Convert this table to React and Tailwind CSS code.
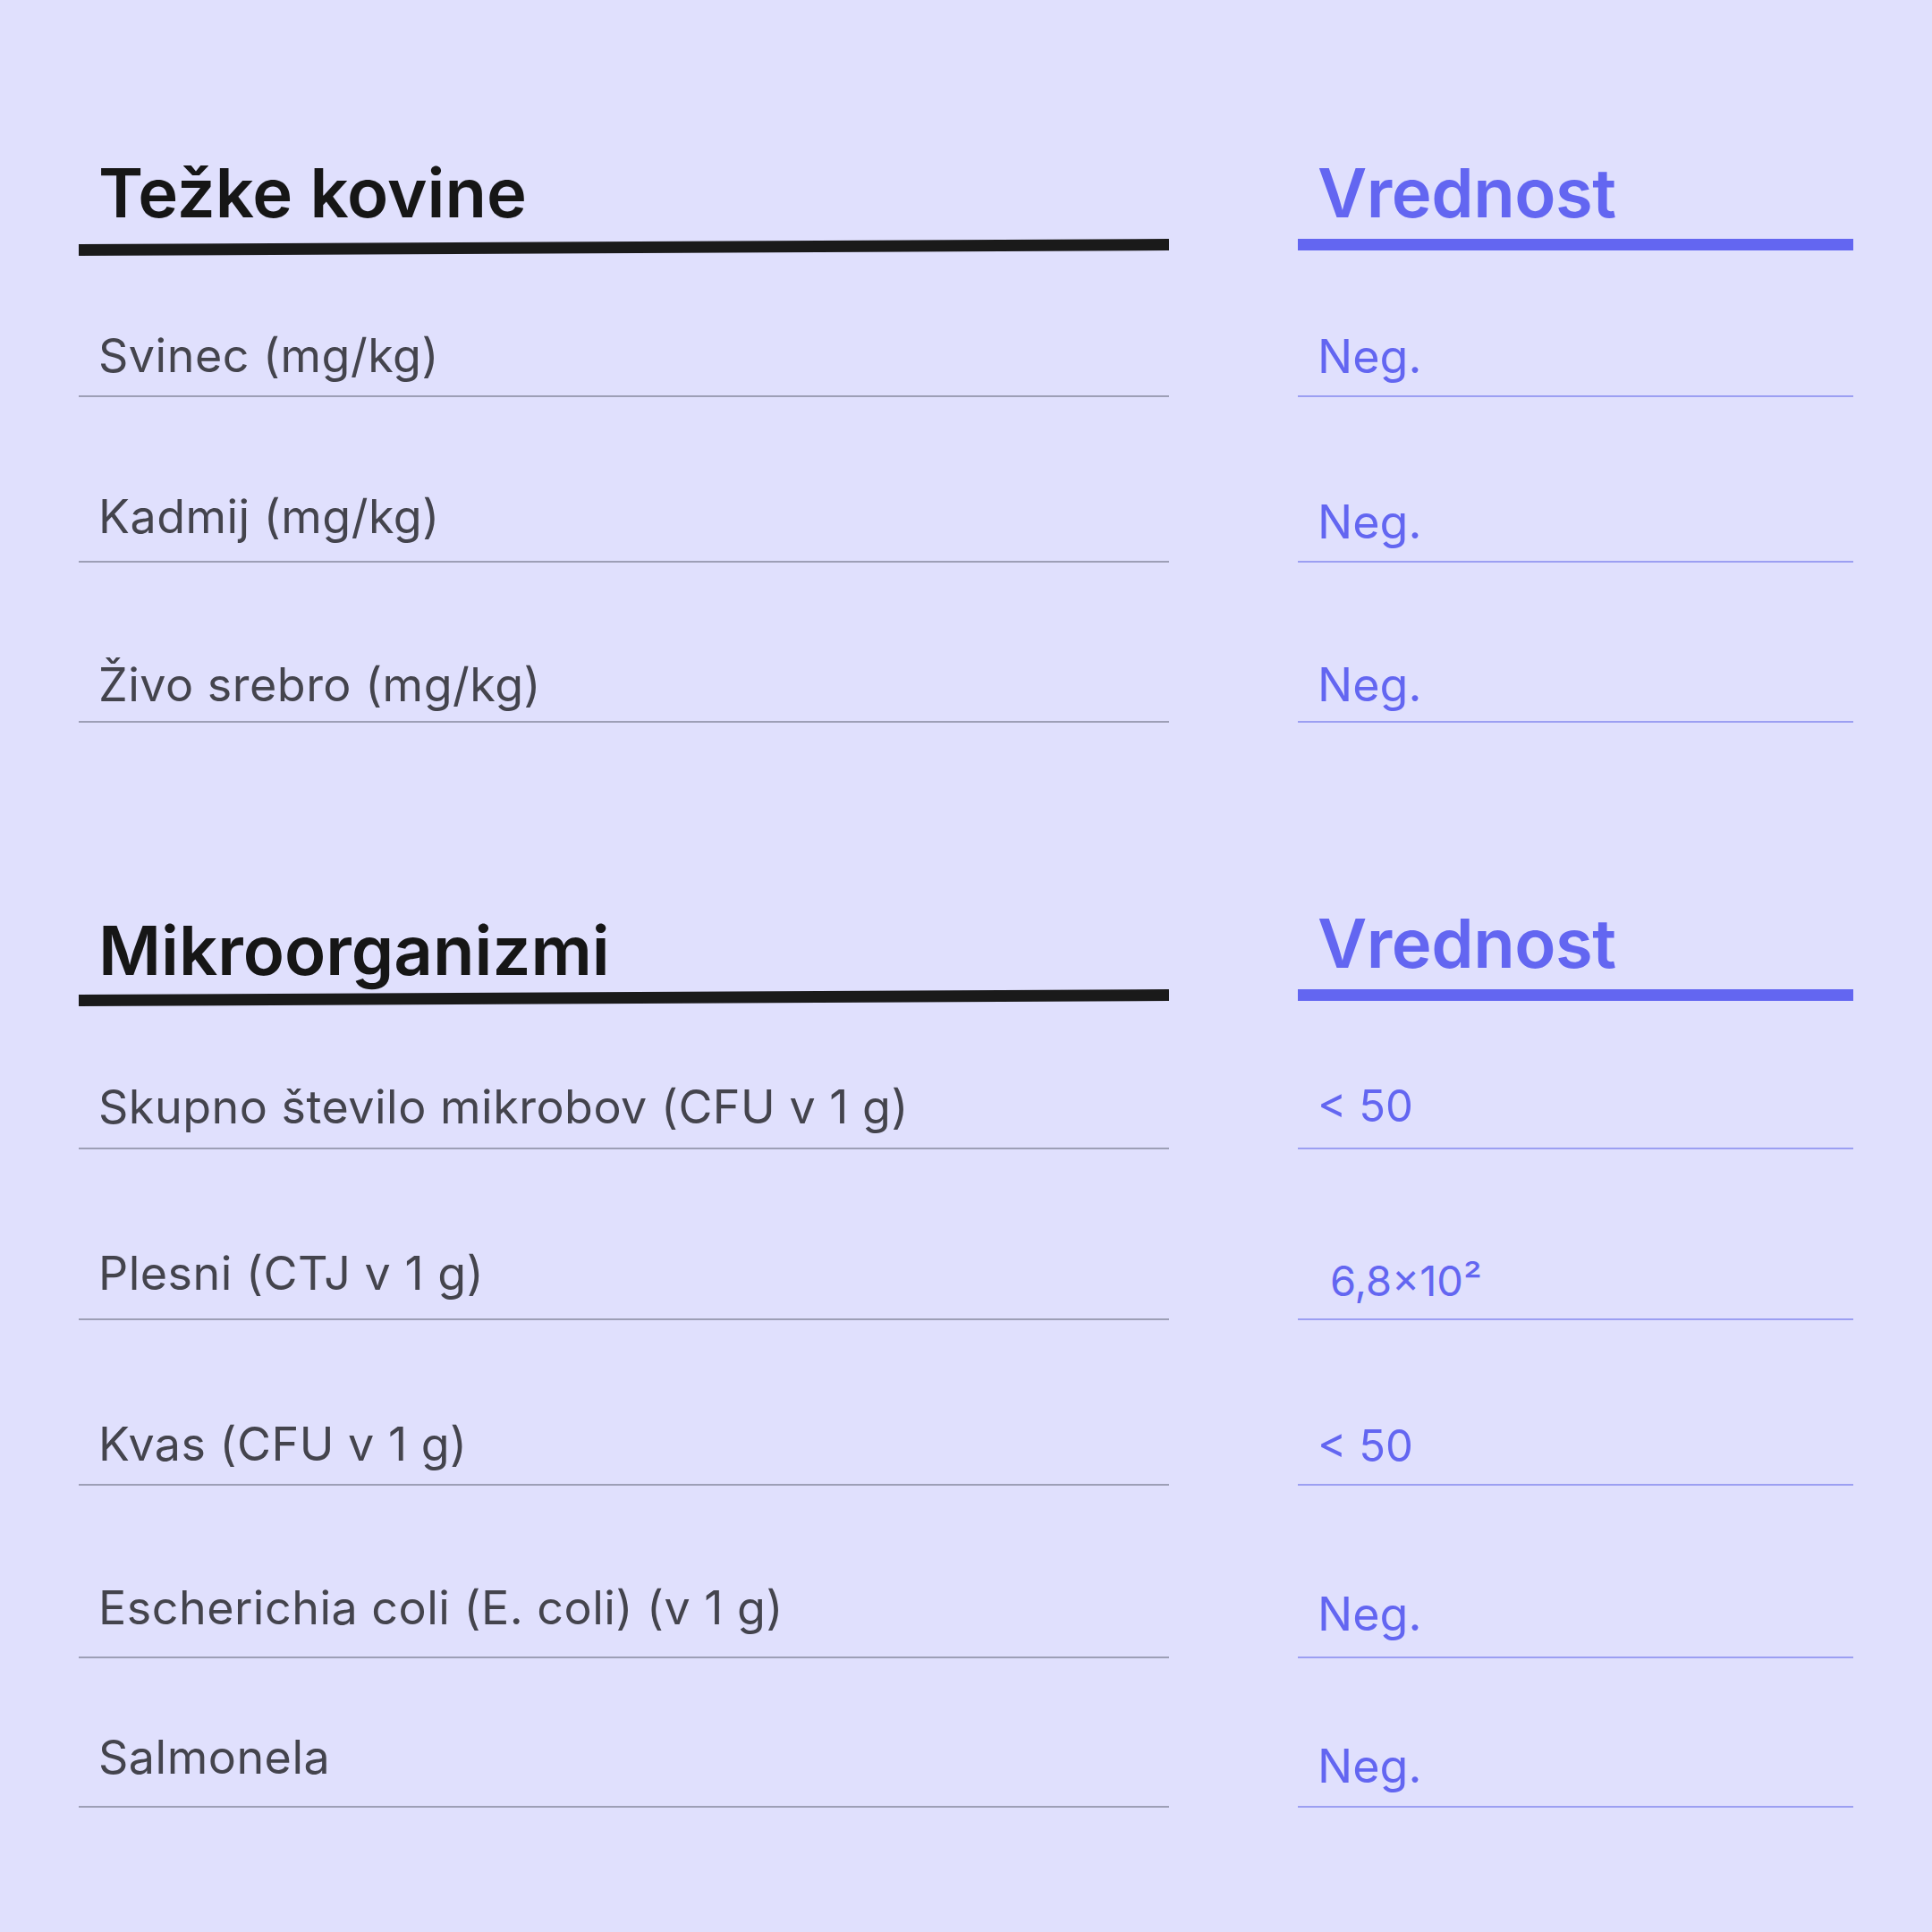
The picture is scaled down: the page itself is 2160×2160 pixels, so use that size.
import React from 'react';

const heavyMetals = [
  { label: 'Svinec (mg/kg)', value: 'Neg.', row: 'h-[161px]', lpb: 'pb-[18px]', rpb: 'pb-[17px]' },
  { label: 'Kadmij (mg/kg)', value: 'Neg.', row: 'h-[185px]', lpb: 'pb-[23px]', rpb: 'pb-[17px]' },
  { label: 'Živo srebro (mg/kg)', value: 'Neg.', row: 'h-[179px]', lpb: 'pb-[14px]', rpb: 'pb-[14px]' },
];

const microbes = [
  { label: 'Skupno število mikrobov (CFU v 1 g)', value: '< 50', row: 'h-[163px]', lpb: 'pb-[19px]', rpb: 'pb-[22px]', small: true },
  { label: 'Plesni (CTJ v 1 g)', value: '6,8×10²', row: 'h-[191px]', lpb: 'pb-[24px]', rpb: 'pb-[19px]', indent: true },
  { label: 'Kvas (CFU v 1 g)', value: '< 50', row: 'h-[185px]', lpb: 'pb-[18px]', rpb: 'pb-[18px]', small: true },
  { label: 'Escherichia coli (E. coli) (v 1 g)', value: 'Neg.', row: 'h-[193px]', lpb: 'pb-[28px]', rpb: 'pb-[21px]' },
  { label: 'Salmonela', value: 'Neg.', row: 'h-[167px]', lpb: 'pb-[28px]', rpb: 'pb-[18px]' },
];

function Row({ item }) {
  let valueSize = 'text-[52px]';
  if (item.indent) valueSize = 'text-[47px]';
  else if (item.small) valueSize = 'text-[49px]';

  return (
    <div className={`grid grid-cols-[1219px_621px] gap-x-[144px] ${item.row}`}>
      <div className={`flex items-end border-b-2 border-[#9d9fb6] pl-[22px] ${item.lpb}`}>
        <span className="text-[52px] leading-none tracking-[0.5px] text-[#44444d]">{item.label}</span>
      </div>
      <div className={`flex items-end border-b-2 border-[#9c9ff2] ${item.indent ? 'pl-[36px]' : 'pl-[22px]'} ${item.rpb}`}>
        <span className={`${valueSize} leading-none text-[#6366f1]`}>{item.value}</span>
      </div>
    </div>
  );
}

export default function App() {
  return (
    <div className="min-h-screen w-full bg-[#e0e0fd] px-[88px] font-['Inter','Liberation_Sans',sans-serif]">
      {/* --- Težke kovine --- */}
      <div className="grid grid-cols-[1219px_621px] gap-x-[144px] items-start">
        <div className="pt-[177px]">
          <h2 className="pl-[22px] text-[76px] font-semibold leading-none text-[#161616]">Težke kovine</h2>
          <div className="mt-[17px] h-[13px] bg-[#1a1a1a] rotate-[-0.28deg]" />
        </div>
        <div className="pt-[177px]">
          <h2 className="pl-[22px] text-[76px] font-semibold leading-none tracking-[-0.5px] text-[#6366f1]">Vrednost</h2>
          <div className="mt-[14px] h-[13px] bg-[#6366f1]" />
        </div>
      </div>
      {heavyMetals.map((item) => (
        <Row key={item.label} item={item} />
      ))}

      {/* --- Mikroorganizmi --- */}
      <div className="grid grid-cols-[1219px_621px] gap-x-[144px] items-start">
        <div className="pt-[216px]">
          <h2 className="pl-[22px] text-[76px] font-semibold leading-none text-[#161616]">Mikroorganizmi</h2>
          <div className="mt-[9px] h-[13px] bg-[#1a1a1a] rotate-[-0.28deg]" />
        </div>
        <div className="pt-[208px]">
          <h2 className="pl-[22px] text-[76px] font-semibold leading-none tracking-[-0.5px] text-[#6366f1]">Vrednost</h2>
          <div className="mt-[14px] h-[13px] bg-[#6366f1]" />
        </div>
      </div>
      {microbes.map((item) => (
        <Row key={item.label} item={item} />
      ))}
    </div>
  );
}
